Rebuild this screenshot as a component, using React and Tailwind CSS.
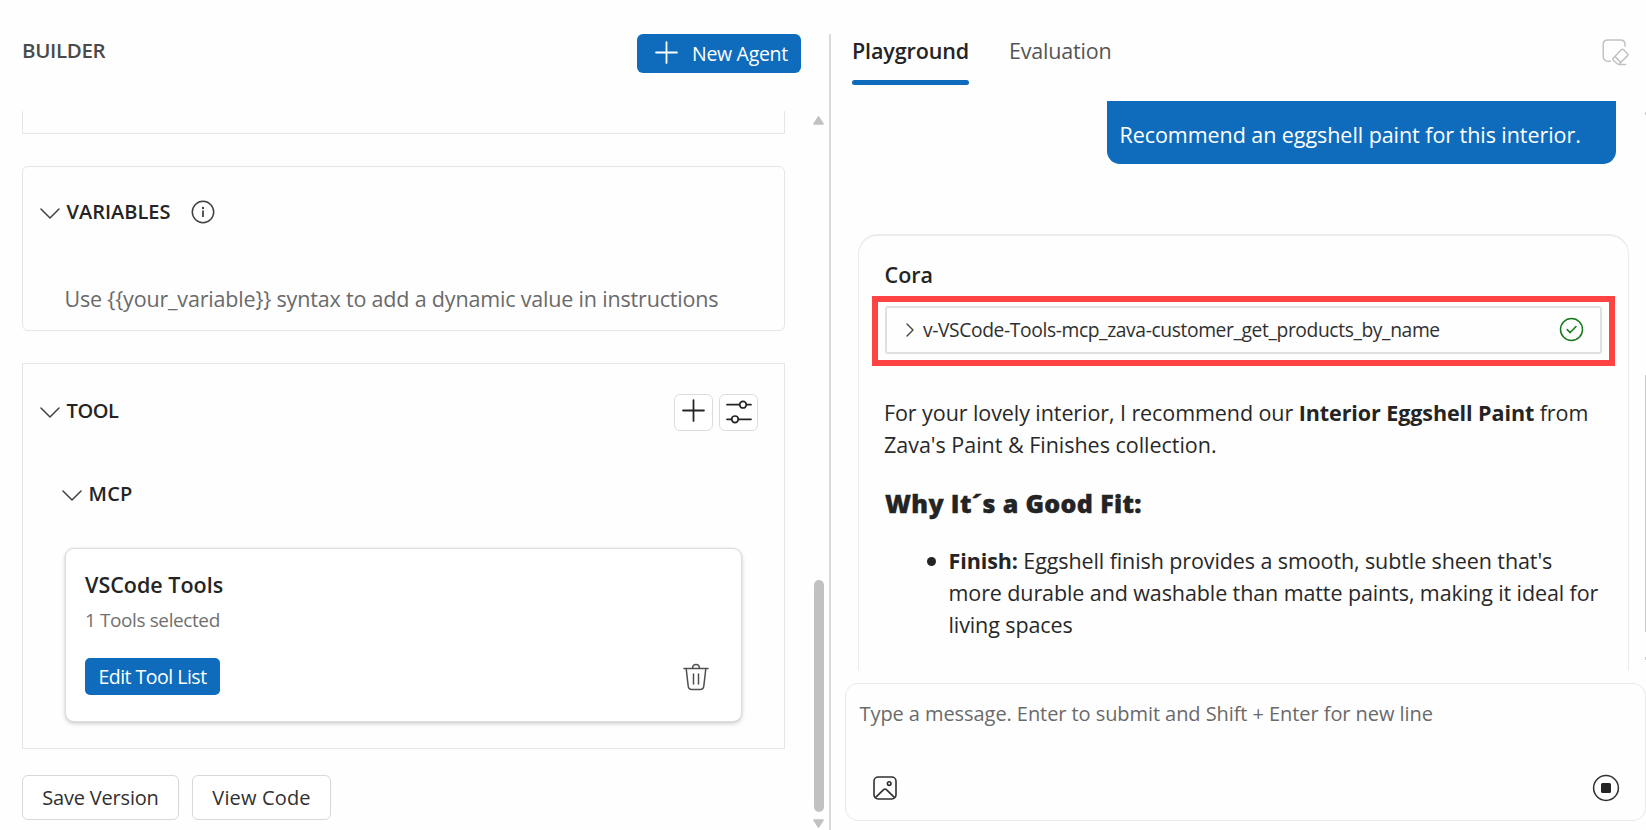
function ChevronDown() {
  return (
    <svg className="h-[11px] w-[20px] shrink-0" viewBox="0 0 20 11" fill="none" stroke="#424242" strokeWidth="1.5" strokeLinecap="round" strokeLinejoin="round">
      <path d="M1 1 L10 10 L19 1" />
    </svg>
  );
}

function PlusIcon({ className }) {
  return (
    <svg className={className} viewBox="0 0 22 22" fill="none" stroke="currentColor" strokeWidth="1.7" strokeLinecap="round">
      <path d="M11 1V21M1 11H21" />
    </svg>
  );
}

function SlidersIcon() {
  return (
    <svg className="mb-[2px] h-[24px] w-[26px]" viewBox="0 0 26 24" fill="none" stroke="#242424" strokeWidth="1.7" strokeLinecap="round">
      <path d="M1 4.7H13.5M20.5 4.7H25" />
      <circle cx="17" cy="4.7" r="3.3" />
      <path d="M1 19.3H5.5M12.5 19.3H25" />
      <circle cx="9" cy="19.3" r="3.3" />
    </svg>
  );
}

function InfoIcon() {
  return (
    <svg className="h-[24px] w-[24px]" viewBox="0 0 24 24" fill="none" stroke="#424242" strokeWidth="1.5">
      <circle cx="12" cy="12" r="10.7" />
      <path d="M12 10.6V17" strokeWidth="1.8" />
      <circle cx="12" cy="8" r="1.2" fill="#424242" stroke="none" />
    </svg>
  );
}

function TrashIcon() {
  return (
    <svg className="h-[28px] w-[26px]" viewBox="0 0 26 28" fill="none" stroke="#505050" strokeWidth="1.5" strokeLinecap="round" strokeLinejoin="round">
      <path d="M1 5.6H25" />
      <path d="M9.6 5.2C9.6 0.2 16.4 0.2 16.4 5.2" />
      <path d="M3.2 5.8L5.2 23.2C5.5 25.6 6.6 26.6 8.8 26.6H17.2C19.4 26.6 20.5 25.6 20.8 23.2L22.8 5.8" />
      <path d="M10.5 11V21M15.5 11V21" />
    </svg>
  );
}

function ClearChatIcon() {
  return (
    <svg className="h-[27px] w-[27px]" viewBox="0 0 27 27" fill="none" stroke="#c2c2c2" strokeWidth="1.5" strokeLinecap="round" strokeLinejoin="round">
      <path d="M8.3 22.2H6C3.2 22.2 1.2 20.4 1.2 17.6V5.6C1.2 2.8 3.2 1 6 1H18.4C21.2 1 23 2.8 23 5.6V7.2" />
      <path d="M11.2 19.2L19.4 10.8C20.1 10.1 20.9 10.1 21.6 10.8L25.5 14.7C26.1 15.4 26.1 16.2 25.4 16.9L17.4 24.8C16.7 25.4 15.9 25.4 15.2 24.8L11.3 21.2C10.7 20.5 10.7 19.8 11.2 19.2Z" />
      <path d="M13 17.6L18.8 23.4M16.6 25.6H23.6" />
    </svg>
  );
}

function ImageIcon() {
  return (
    <svg className="h-[24px] w-[24px]" viewBox="0 0 24 24" fill="none" stroke="#303030" strokeWidth="1.6" strokeLinejoin="round">
      <rect x="1" y="1" width="22" height="22" rx="4.2" />
      <circle cx="16.2" cy="7.6" r="1.8" />
      <path d="M2.4 21.6L10.6 13.6C11.5 12.8 12.5 12.8 13.4 13.6L21.6 21.6" />
    </svg>
  );
}

function Card({ className, children }) {
  return <div className={"w-[763px] shrink-0 border border-[#e6e6e6] " + className}>{children}</div>;
}

function SectionTitle({ children, className = "" }) {
  return (
    <div className="flex items-center">
      <span className="mt-[3px] flex">
        <ChevronDown />
      </span>
      <h2 className={"ml-[6.5px] text-[20px] leading-6 font-semibold text-[#242424] " + className}>{children}</h2>
    </div>
  );
}

function Builder() {
  return (
    <section className="flex h-[830px] w-[829px] shrink-0 flex-col pt-[34px]">
      <header className="flex h-[39px] w-[801px] items-start justify-between pl-[22px]">
        <h1 className="text-[20.5px] leading-8 font-semibold tracking-[-0.35px] text-[#4a4a4a]">BUILDER</h1>
        <button className="flex h-[39px] w-[164px] items-center rounded-[6px] bg-[#0f6cbd] pl-[18px] text-white">
          <PlusIcon className="mb-[3px] h-[23px] w-[23px]" />
          <span className="ml-[14px] text-[19.5px] leading-6 tracking-[-0.3px]">New Agent</span>
        </button>
      </header>

      <div className="mt-[38px] flex h-[719px] justify-between">
        <div className="flex h-[719px] flex-col overflow-hidden pl-[22px]">
          <Card className="h-[23px] border-t-0" />
          <Card className="mt-[32px] h-[165px] rounded-[6px] pl-[17px]">
            <div className="mt-[33px] flex h-6 items-center">
              <SectionTitle>VARIABLES</SectionTitle>
              <span className="ml-[20px] flex">
                <InfoIcon />
              </span>
            </div>
            <p className="mt-[59px] ml-[24.5px] text-[21.5px] leading-8 tracking-[-0.18px] text-[#6a6a6a]">
              {"Use {{your_variable}} syntax to add a dynamic value in instructions"}
            </p>
          </Card>
          <Card className="mt-[32px] h-[386px] pl-[17px]">
            <div className="mt-[30px] flex h-[37px] w-[718px] items-center justify-between">
              <span className="mb-[3px]">
                <SectionTitle className="tracking-[-0.4px]">TOOL</SectionTitle>
              </span>
              <div className="flex gap-[6px]">
                <button className="flex h-[37px] w-[39px] items-center justify-center rounded-[6px] border border-[#dcdcdc] bg-white pr-px text-[#242424]">
                  <PlusIcon className="mb-[4px] h-[23px] w-[23px]" />
                </button>
                <button className="flex h-[37px] w-[39px] items-center justify-center rounded-[6px] border border-[#dcdcdc] bg-white">
                  <SlidersIcon />
                </button>
              </div>
            </div>
            <div className="mt-[51px] ml-[22px]">
              <SectionTitle className="tracking-[0.2px]">MCP</SectionTitle>
            </div>
            <div className="mt-[42px] ml-[25px] flex h-[174px] w-[677px] flex-col rounded-[9px] border border-[#dedede] bg-white px-[19px] shadow-[0_2px_4px_rgba(0,0,0,0.17),0_0_2px_rgba(0,0,0,0.1)]">
              <h3 className="mt-[20px] text-[21.5px] leading-8 font-semibold text-[#242424]">VSCode Tools</h3>
              <p className="mt-[5px] text-[19px] leading-7 tracking-[-0.4px] text-[#707070]">1 Tools selected</p>
              <div className="mt-[24px] flex items-center justify-between pr-[13px]">
                <button className="flex h-[37px] w-[135px] items-center justify-center rounded-[5px] bg-[#0f6cbd] text-[19.5px] leading-6 tracking-[-0.5px] text-white">Edit Tool List</button>
                <TrashIcon />
              </div>
            </div>
          </Card>
          <div className="mt-[26px] flex gap-[13px]">
            <button className="flex h-[45px] w-[157px] items-center justify-center rounded-[6px] border border-[#d8d8d8] bg-white text-[20px] leading-6 tracking-[-0.2px] text-[#303030]">Save Version</button>
            <button className="flex h-[45px] w-[139px] items-center justify-center rounded-[6px] border border-[#d8d8d8] bg-white text-[20px] leading-6 tracking-[0.15px] text-[#303030]">View Code</button>
          </div>
        </div>

        <div className="mr-[5px] flex h-[719px] w-[11px] flex-col items-center pt-[5px]">
          <svg className="h-[9px] w-[11px] shrink-0" viewBox="0 0 11 9">
            <path d="M5.5 1L10 8H1Z" fill="#c1c1c1" stroke="#c1c1c1" strokeWidth="1.6" strokeLinejoin="round" />
          </svg>
          <div className="mt-[455px] h-[232px] w-[10px] shrink-0 rounded-full bg-[#c1c1c1]" />
          <svg className="mt-[7px] h-[9px] w-[11px] shrink-0" viewBox="0 0 11 9">
            <path d="M5.5 8L10 1H1Z" fill="#c1c1c1" stroke="#c1c1c1" strokeWidth="1.6" strokeLinejoin="round" />
          </svg>
        </div>
      </div>
    </section>
  );
}

function ToolCall() {
  return (
    <div className="relative mt-[15px] flex h-[48px] w-[717px] items-center rounded-[3px] border-2 border-[#e0e0e0]">
      <svg className="mb-[1px] ml-[19px] h-[14px] w-[8px]" viewBox="0 0 8 14" fill="none" stroke="#424242" strokeWidth="1.4" strokeLinecap="round" strokeLinejoin="round">
        <path d="M1 1L7 7L1 13" />
      </svg>
      <span className="ml-[9px] text-[19.25px] leading-6 tracking-[-0.39px] text-[#303030]">v-VSCode-Tools-mcp_zava-customer_get_products_by_name</span>
      <svg className="mr-[16px] mb-[1px] ml-auto h-[25px] w-[25px]" viewBox="0 0 25 25" fill="none" stroke="#177a1c" strokeWidth="1.5" strokeLinecap="round" strokeLinejoin="round">
        <circle cx="12.5" cy="12.5" r="11" />
        <path d="M8.2 12.6L11.2 15.6L17 9.6" />
      </svg>
      <div className="pointer-events-none absolute -top-[12px] -right-[15px] -bottom-[14px] -left-[15px] border-[6px] border-[#ff4343]" />
    </div>
  );
}

function Chat() {
  return (
    <div className="flex h-[569px] justify-between overflow-hidden">
      <div className="flex w-[785px] flex-col">
        <div className="mr-[13px] flex h-[63px] w-[509px] shrink-0 items-center self-end rounded-b-[13px] bg-[#0f6cbd] pt-[4px] pl-[12.5px] text-[21.5px] leading-8 tracking-[-0.06px] whitespace-nowrap text-white">
          Recommend an eggshell paint for this interior.
        </div>
        <article className="mt-[70px] ml-[14px] h-[500px] w-[771px] shrink-0 rounded-[20px] border border-t-2 border-[#ebebeb] pl-[26px] text-[21.5px] leading-[32.3px] text-[#282828]">
          <h2 className="mt-[23px] -ml-[0.5px] text-[21.5px] leading-8 font-semibold text-[#242424]">Cora</h2>
          <ToolCall />
          <div className="-ml-px">
            <p className="mt-[42.5px] w-[740px] tracking-[-0.08px] whitespace-nowrap">
              For your lovely interior, I recommend our <strong className="font-bold text-[#242424]">Interior Eggshell Paint</strong> from
              <br />
              <span className="tracking-[-0.02px]">Zava's Paint &amp; Finishes collection.</span>
            </p>
            <h3 className="mt-[25.5px] ml-px text-[25px] leading-8 font-extrabold tracking-[0.35px] text-[#242424] [-webkit-text-stroke:0.4px_#242424]">Why It´s a Good Fit:</h3>
            <div className="mt-[26px] flex">
              <span className="mt-[12px] ml-[42.5px] h-[9px] w-[9px] rounded-full bg-[#242424]" />
              <p className="ml-[13px] leading-[32.4px] tracking-[-0.1px] whitespace-nowrap">
                <strong className="font-bold text-[#242424]">Finish:</strong> Eggshell finish provides a smooth, subtle sheen that's
                <br />
                more durable and washable than matte paints, making it ideal for
                <br />
                living spaces
              </p>
            </div>
          </div>
        </article>
      </div>
      <div className="flex w-px flex-col bg-transparent">
        <span className="mt-[11px] h-[3px] bg-[#c9c9c9]" />
        <span className="mt-[260px] h-[257px] bg-[#c9c9c9]" />
        <span className="mt-[25px] h-[3px] bg-[#c9c9c9]" />
      </div>
    </div>
  );
}

function Composer() {
  return (
    <div className="mt-[13px] ml-px flex h-[138px] w-[801px] flex-col rounded-[13px] border border-[#e9e9e9]">
      <p className="mt-[14px] ml-[13.5px] text-[20px] leading-8 tracking-[-0.07px] text-[#6a6a6a]">Type a message. Enter to submit and Shift + Enter for new line</p>
      <div className="mt-[44px] ml-[27px] flex items-center justify-between pr-[25px]">
        <ImageIcon />
        <svg className="h-[28px] w-[28px]" viewBox="0 0 28 28" fill="none">
          <circle cx="14" cy="14" r="12.4" stroke="#303030" strokeWidth="1.5" />
          <rect x="9" y="9" width="10" height="10" rx="1.5" fill="#242424" />
        </svg>
      </div>
    </div>
  );
}

function Playground() {
  return (
    <section className="flex h-[830px] w-[815px] flex-col pt-[34px] pl-[13px]">
      <header className="flex h-[67px] items-start justify-between pr-[17px] pl-[8px]">
        <nav className="flex text-[21.5px] leading-8">
          <a className="flex h-[51px] w-[117px] flex-col items-center font-semibold text-[#242424]">
            <span className="mt-[1px] tracking-[-0.1px]">Playground</span>
            <span className="mt-auto h-[5px] w-full rounded-full bg-[#0f6cbd]" />
          </a>
          <a className="mt-[1px] ml-[40px] tracking-[-0.2px] text-[#555555]">Evaluation</a>
        </nav>
        <span className="mt-[5px]">
          <ClearChatIcon />
        </span>
      </header>
      <Chat />
      <Composer />
    </section>
  );
}

export default function App() {
  return (
    <main className="flex h-[830px] w-[1646px] overflow-hidden bg-[#fefefe] font-['Open_Sans','Noto_Sans',sans-serif]">
      <Builder />
      <div className="mt-[34px] h-[796px] w-[2px] shrink-0 bg-[#d9d9d9]" />
      <Playground />
    </main>
  );
}
